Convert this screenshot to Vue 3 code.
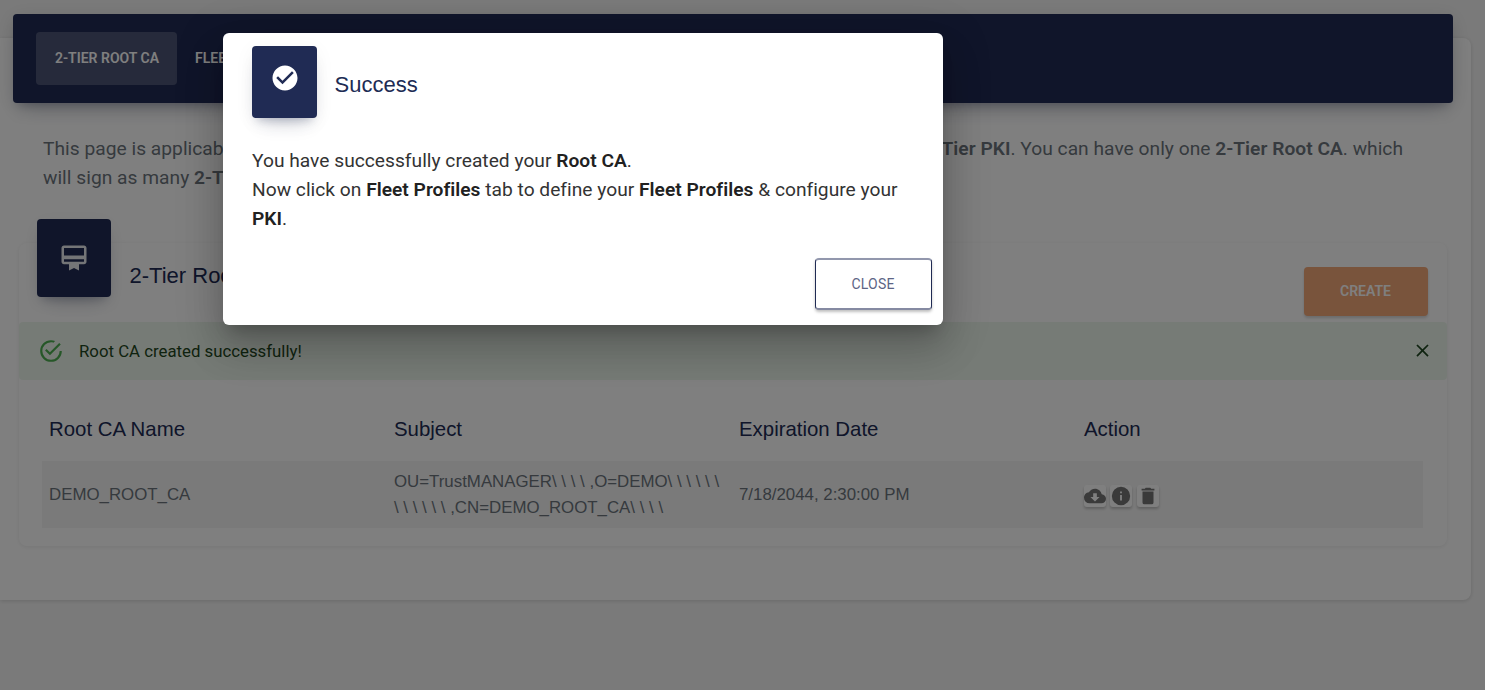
<script setup>
import { ref } from 'vue'

const dialogOpen = ref(true)
const headers = ['Root CA Name', 'Subject', 'Expiration Date', 'Action']
const row = {
  name: 'DEMO_ROOT_CA',
  subjectLines: [
    'OU=TrustMANAGER\\ \\ \\ \\ ,O=DEMO\\ \\ \\ \\ \\ \\',
    '\\ \\ \\ \\ \\ \\ ,CN=DEMO_ROOT_CA\\ \\ \\ \\',
  ],
  expires: '7/18/2044, 2:30:00 PM',
}
const actions = [
  { name: 'download', path: 'M17,13L12,18L7,13H10V9H14V13M19.35,10.03C18.67,6.59 15.64,4 12,4C9.11,4 6.6,5.64 5.35,8.03C2.34,8.36 0,10.9 0,14A6,6 0 0,0 6,20H19A5,5 0 0,0 24,15C24,12.36 21.95,10.22 19.35,10.03Z' },
  { name: 'info', path: 'M13,9H11V7H13M13,17H11V11H13M12,2A10,10 0 0,0 2,12A10,10 0 0,0 12,22A10,10 0 0,0 22,12A10,10 0 0,0 12,2Z' },
  { name: 'delete', path: 'M19,4H15.5L14.5,3H9.5L8.5,4H5V6H19M6,19A2,2 0 0,0 8,21H16A2,2 0 0,0 18,19V7H6V19Z' },
]
</script>

<template>
  <div class="page">
    <main class="card">
      <nav class="tabs">
        <button class="tab active">2-Tier Root CA</button>
        <button class="tab">Fleet</button>
      </nav>

      <p class="intro">
        <span class="intro-start">This page is applicable</span><b>Tier PKI</b>. You can have only one <b>2-Tier Root CA</b>. which<br>
        will sign as many <b>2-Tier</b>
      </p>

      <section class="panel">
        <header class="panel-head">
          <div class="badge">
            <svg viewBox="0 0 24 24" width="30" height="30"><path d="M20,2H4C2.89,2 2,2.89 2,4V15C2,16.11 2.89,17 4,17H8V22L12,20L16,22V17H20C21.11,17 22,16.11 22,15V4C22,2.89 21.11,2 20,2M20,15H4V13H20V15M20,10H4V4H20V10Z" /></svg>
          </div>
          <h2>2-Tier Root</h2>
          <button class="create">Create</button>
        </header>

        <div class="alert">
          <svg class="alert-icon" viewBox="0 0 24 24" width="26" height="26"><path d="M20,12A8,8 0 0,1 12,20A8,8 0 0,1 4,12A8,8 0 0,1 12,4C12.76,4 13.5,4.11 14.2,4.31L15.77,2.74C14.61,2.26 13.34,2 12,2A10,10 0 0,0 2,12A10,10 0 0,0 12,22A10,10 0 0,0 22,12M7.91,10.08L6.5,11.5L11,16L21,6L19.59,4.58L11,13.17L7.91,10.08Z" /></svg>
          <span>Root CA created successfully!</span>
          <svg class="dismiss" viewBox="0 0 24 24" width="21" height="21"><path d="M19,6.41L17.59,5L12,10.59L6.41,5L5,6.41L10.59,12L5,17.59L6.41,19L12,13.41L17.59,19L19,17.59L13.41,12L19,6.41Z" /></svg>
        </div>

        <div class="table">
          <div class="row head">
            <div v-for="h in headers" :key="h">{{ h }}</div>
          </div>
          <div class="row body">
            <div>{{ row.name }}</div>
            <div><div v-for="line in row.subjectLines" :key="line" class="line">{{ line }}</div></div>
            <div>{{ row.expires }}</div>
            <div class="actions">
              <button v-for="a in actions" :key="a.name" :class="a.name" :aria-label="a.name">
                <svg viewBox="0 0 24 24" width="22" height="22"><path :d="a.path" /></svg>
              </button>
            </div>
          </div>
        </div>
      </section>
    </main>

    <div v-if="dialogOpen" class="overlay">
      <div class="dialog">
        <header class="dialog-head">
          <div class="dialog-badge">
            <svg viewBox="0 0 24 24" width="30" height="30"><path d="M12 2C6.5 2 2 6.5 2 12S6.5 22 12 22 22 17.5 22 12 17.5 2 12 2M10 17L5 12L6.41 10.59L10 14.17L17.59 6.58L19 8L10 17Z" /></svg>
          </div>
          <h2>Success</h2>
        </header>
        <p class="message">
          You have successfully created your <b>Root CA</b>.<br>
          Now click on <b>Fleet Profiles</b> tab to define your <b>Fleet Profiles</b> &amp; configure your<br>
          <b>PKI</b>.
        </p>
        <footer><button class="close" @click="dialogOpen = false">Close</button></footer>
      </div>
    </div>
  </div>
</template>

<style>
body { margin: 0; overflow: hidden; }
</style>

<style scoped>
* { box-sizing: border-box; }
.page {
  position: relative;
  height: 690px;
  overflow: hidden;
  display: flow-root;
  background: #f5f5f5;
  font-family: Roboto, "Liberation Sans", sans-serif;
}
button { font: inherit; border: 0; padding: 0; margin: 0; }
svg { display: block; fill: currentColor; flex: none; }
h2, p { margin: 0; }
b { font-weight: 600; }

.card {
  width: 1471px;
  height: 562px;
  margin-top: 38px;
  display: flow-root;
  background: #fff;
  border-radius: 0 8px 8px 0;
  box-shadow: 0 1px 4px rgba(0, 0, 0, .14);
}
.tabs {
  display: flex;
  align-items: center;
  width: 1440px;
  height: 89px;
  margin: -24px 0 0 13px;
  padding: 0 23px;
  border-radius: 4px;
  background: #202b54;
  box-shadow: 0 12px 20px -10px rgba(32, 43, 84, .28), 0 4px 20px rgba(0, 0, 0, .12), 0 7px 8px -5px rgba(32, 43, 84, .2);
}
.tab {
  height: 53px;
  padding: 0 17px 2px 18px;
  border-radius: 4px;
  background: transparent;
  color: #fff;
  font-size: 14px;
  font-weight: 600;
  text-transform: uppercase;
  white-space: nowrap;
}
.tab.active { width: 141px; background: rgba(255, 255, 255, .2); }

.intro {
  margin: 31px 0 0 43px;
  color: #6c757d;
  font-size: 19.2px;
  font-weight: 400;
  line-height: 29px;
  letter-spacing: .02px;
  white-space: nowrap;
}
.intro-start {
  display: inline-block;
  width: 898.5px;
  overflow: hidden;
  vertical-align: top;
}

.panel {
  width: 1428px;
  height: 303px;
  margin: 51px 0 0 19px;
  display: flow-root;
  border-radius: 8px;
  box-shadow: 0 1px 4px rgba(0, 0, 0, .08);
}
.panel-head {
  display: flex;
  align-items: flex-start;
  height: 79px;
  padding: 0 19px 0 18px;
}
.badge {
  display: flex;
  align-items: center;
  justify-content: center;
  width: 74px;
  height: 78px;
  margin-top: -24px;
  padding-bottom: 1px;
  border-radius: 4px;
  color: #fff;
  background: #202b54;
  box-shadow: 0 12px 20px -10px rgba(32, 43, 84, .28), 0 4px 20px rgba(0, 0, 0, .06), 0 7px 8px -5px rgba(32, 43, 84, .2);
}
.badge svg { opacity: .9; }
h2 {
  color: #202b54;
  font: 400 22px/28px "Liberation Sans", sans-serif;
}
.panel-head h2 { margin: 19px 0 0 18.5px; }
.create {
  width: 124px;
  height: 49px;
  margin: 24px 0 0 auto;
  padding: 0 1px 2px 0;
  border-radius: 4px;
  color: #fff;
  background: #f3a878;
  font-size: 14px;
  font-weight: 600;
  text-transform: uppercase;
  box-shadow: 0 2px 3px rgba(0, 0, 0, .16);
}
.alert {
  display: flex;
  align-items: center;
  height: 58px;
  padding: 0 14px 0 19px;
  border-radius: 4px;
  background: #edf7ed;
  color: #1e4620;
  font-size: 16.8px;
}
.alert-icon { color: #4caf50; margin-right: 15px; }
.dismiss { margin: 0 0 1px auto; }

.table { margin: 17px 24px 0 23px; }
.row { display: grid; grid-template-columns: repeat(4, 345px); width: 1381px; align-items: center; }
.row > div { padding-left: 7px; }
.head { height: 64px; color: #202b54; font: 20.4px "Liberation Sans", sans-serif; }
.body {
  height: 67px;
  background: #f5f5f5;
  color: #6c757d;
  font: 16.85px "Liberation Sans", sans-serif;
}
.line { line-height: 26px; white-space: nowrap; }
.actions { display: flex; gap: 4px; padding-top: 2px; }
.actions button {
  width: 22px;
  height: 22px;
  border-radius: 3px;
  color: #757575;
  background: #fff;
  box-shadow: 0 2px 3px rgba(0, 0, 0, .22);
}
.actions .delete { margin-left: 1px; }

.overlay {
  position: absolute;
  inset: 0;
  background: rgba(0, 0, 0, .5);
}
.dialog {
  width: 720px;
  height: 292px;
  margin: 33px 0 0 223px;
  padding: 13px 11px 0 29px;
  border-radius: 6px;
  background: #fff;
  box-shadow: 0 11px 15px -7px rgba(0, 0, 0, .2), 0 24px 38px 3px rgba(0, 0, 0, .14), 0 9px 46px 8px rgba(0, 0, 0, .12);
}
.dialog-head { display: flex; }
.dialog-badge {
  display: flex;
  justify-content: center;
  width: 65px;
  height: 72px;
  padding-top: 17px;
  border-radius: 4px;
  color: #fff;
  background: #202b54;
  box-shadow: 0 12px 20px -10px rgba(32, 43, 84, .28), 0 4px 20px rgba(0, 0, 0, .05), 0 7px 8px -5px rgba(32, 43, 84, .2);
}
.dialog-head h2 { margin: 25px 0 0 17.5px; }
.message {
  margin-top: 28px;
  color: #333;
  font-size: 19.2px;
  font-weight: 400;
  line-height: 29px;
  letter-spacing: .01px;
  white-space: nowrap;
}
.message b { color: #212121; }
footer { display: flex; justify-content: flex-end; margin-top: 25px; }
.close {
  width: 117px;
  height: 52px;
  padding-right: 1px;
  border: solid #202b54;
  border-width: 2px 1px;
  border-top-color: #9297ad;
  border-bottom-color: #858aa2;
  border-radius: 4px;
  background: #fff;
  color: #5c6485;
  font-size: 14px;
  font-weight: 400;
  letter-spacing: .2px;
  text-transform: uppercase;
  box-shadow: 0 2px 3px rgba(0, 0, 0, .25);
}
</style>
